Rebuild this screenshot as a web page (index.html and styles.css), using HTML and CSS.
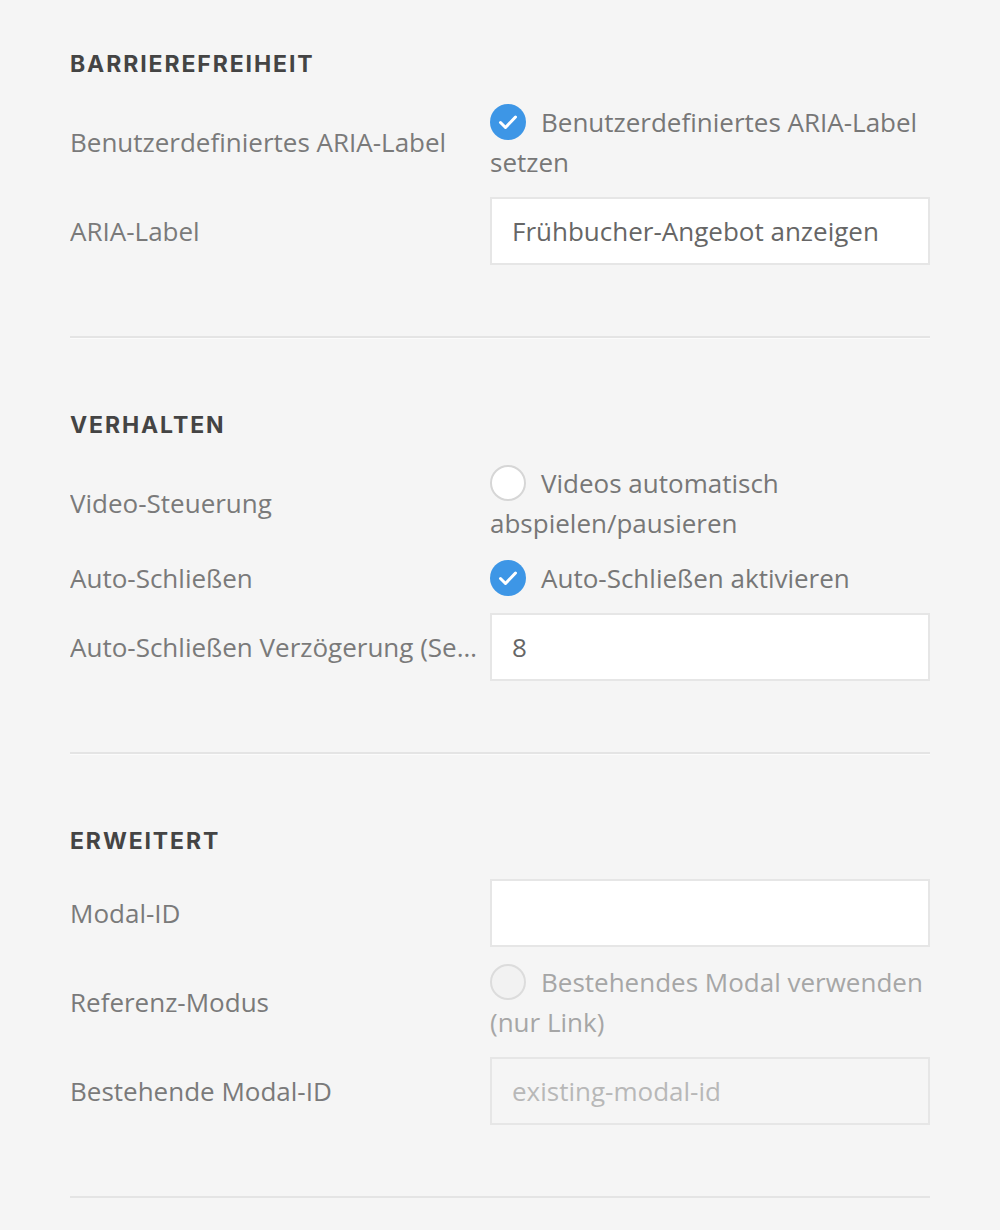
FILE: index.html
```html
<!DOCTYPE html>
<html lang="de">
<head>
<meta charset="utf-8">
<title>Einstellungen</title>
<link rel="stylesheet" href="styles.css">
</head>
<body>
<div class="panel">
  <section class="section">
    <h2 class="section-title">BARRIEREFREIHEIT</h2>
    <div class="rows">
      <div class="row">
        <div class="label">Benutzerdefiniertes ARIA-Label</div>
        <div class="control check-text"><span class="check on"><svg viewBox="0 0 36 36" width="36" height="36"><path d="M10.5 18.5l5 5 10-10.5" fill="none" stroke="#fff" stroke-width="3" stroke-linecap="round" stroke-linejoin="round"/></svg></span>Benutzerdefiniertes ARIA-Label setzen</div>
      </div>
      <div class="row">
        <div class="label">ARIA-Label</div>
        <div class="control"><div class="input">Frühbucher-Angebot anzeigen</div></div>
      </div>
    </div>
  </section>
  <section class="section">
    <h2 class="section-title">VERHALTEN</h2>
    <div class="rows">
      <div class="row">
        <div class="label">Video-Steuerung</div>
        <div class="control check-text"><span class="check off"></span>Videos automatisch abspielen/pausieren</div>
      </div>
      <div class="row">
        <div class="label">Auto-Schließen</div>
        <div class="control check-text"><span class="check on"><svg viewBox="0 0 36 36" width="36" height="36"><path d="M10.5 18.5l5 5 10-10.5" fill="none" stroke="#fff" stroke-width="3" stroke-linecap="round" stroke-linejoin="round"/></svg></span>Auto-Schließen aktivieren</div>
      </div>
      <div class="row">
        <div class="label">Auto-Schließen Verzögerung (Sekunden)</div>
        <div class="control"><div class="input">8</div></div>
      </div>
    </div>
  </section>
  <section class="section">
    <h2 class="section-title">ERWEITERT</h2>
    <div class="rows">
      <div class="row">
        <div class="label">Modal-ID</div>
        <div class="control"><div class="input"></div></div>
      </div>
      <div class="row">
        <div class="label">Referenz-Modus</div>
        <div class="control check-text disabled"><span class="check off dis"></span>Bestehendes Modal verwenden (nur Link)</div>
      </div>
      <div class="row">
        <div class="label">Bestehende Modal-ID</div>
        <div class="control"><div class="input input-disabled">existing-modal-id</div></div>
      </div>
    </div>
  </section>
</div>
</body>
</html>
```
FILE: styles.css
```css
html, body {
  margin: 0;
  padding: 0;
  background: #f5f5f5;
}
body {
  font-family: "Open Sans", "Liberation Sans", sans-serif;
  color: #777;
}
.panel {
  padding: 0 70px;
}
.section {
  padding: 72px 0 71px;
  border-bottom: 2px solid #e4e4e4;
  box-shadow: 0 1px 0 #fbfbfb;
}
.section:first-child {
  padding-top: 49px;
}
.section-title {
  margin: 0 0 23px;
  font-family: Inter, "Liberation Sans", sans-serif;
  font-weight: 700;
  font-size: 23px;
  line-height: 30px;
  letter-spacing: 1.9px;
  color: #444;
}
.rows {
  display: flex;
  flex-direction: column;
  gap: 15px;
}
.row {
  display: grid;
  grid-template-columns: 408px 440px;
  column-gap: 12px;
  align-items: center;
}
.label {
  font-size: 26px;
  line-height: 40px;
  color: #7a7a7a;
  white-space: nowrap;
  overflow: hidden;
  text-overflow: ellipsis;
}
.check-text {
  font-size: 26px;
  line-height: 40px;
  color: #777;
}
.check-text.disabled {
  color: #a6a6a6;
}
.check {
  display: inline-block;
  width: 36px;
  height: 36px;
  border-radius: 50%;
  box-sizing: border-box;
  vertical-align: -8px;
  margin-right: 15px;
}
.check svg {
  display: block;
}
.check.on {
  background: #3d96e6;
}
.check.off {
  background: #fff;
  border: 2px solid #d6d6d6;
}
.check.off.dis {
  background: #f2f2f2;
  border-color: #dcdcdc;
}
.input {
  box-sizing: border-box;
  height: 68px;
  background: #fff;
  border: 2px solid #e6e6e6;
  padding: 0 20px;
  font-size: 26px;
  line-height: 64px;
  color: #666;
}
.input-disabled {
  background: #f5f5f5;
  border-color: #e6e6e6;
  color: #b8b8b8;
}
```
